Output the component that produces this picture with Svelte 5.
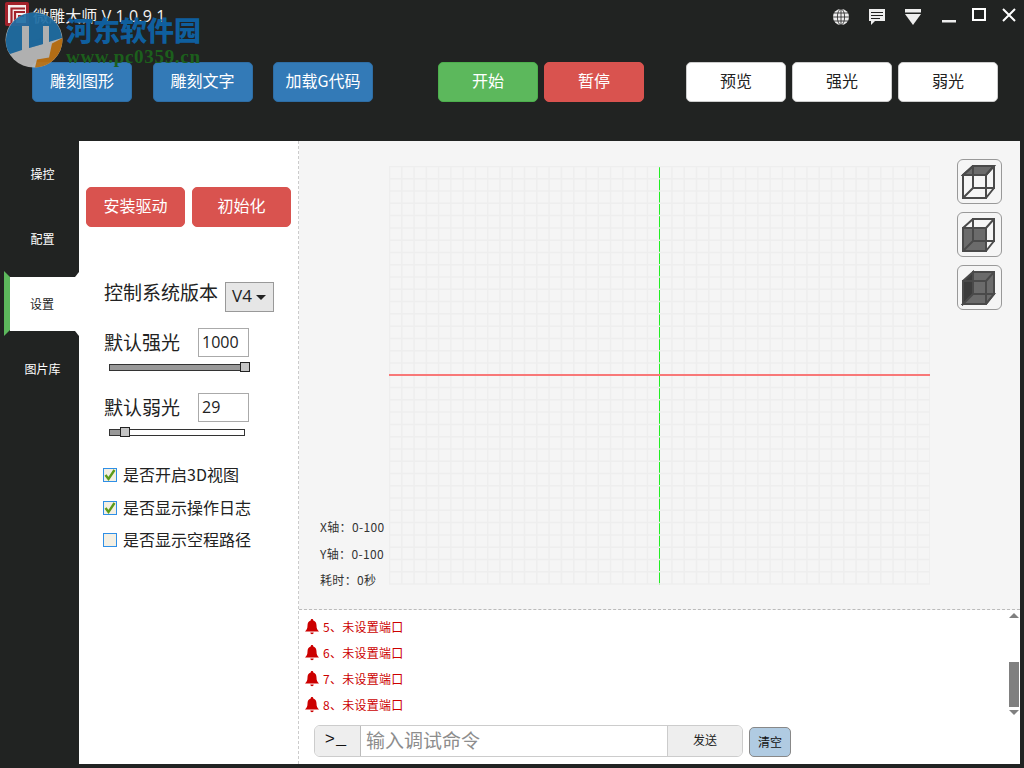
<script>
  const leftBtns = ['雕刻图形', '雕刻文字', '加载G代码'];
  const viewBtns = ['预览', '强光', '弱光'];
  const tabs = ['操控', '配置', '设置', '图片库'];
  const checks = [
    { label: '是否开启3D视图', on: true },
    { label: '是否显示操作日志', on: true },
    { label: '是否显示空程路径', on: false }
  ];
  const logs = [5, 6, 7, 8];

  const W = 541;
  const H = 419;
  const STEP = 12.28;
  const xs = Array.from({ length: 45 }, (_, i) => i * STEP + 0.5);
  const ys = Array.from({ length: 35 }, (_, i) => i * STEP + 0.5);
</script>

{#snippet bell()}
  <svg width="14" height="16" viewBox="0 0 14 16" fill="#cc0000">
    <path d="M7 0c1 0 1.300.7 1.300 1.400C10.500 2 11.500 4 11.500 6.500c0 3 .8 4.500 2.500 6H0c1.700-1.500 2.500-3 2.500-6C2.500 4 3.500 2 5.700 1.400 5.700.7 6 0 7 0z" />
    <path d="M5.300 13.500h3.400a1.700 1.700 0 0 1-3.400 0z" />
  </svg>
{/snippet}

<div class="app">
  <header class="head">
    <div class="titlebar">
      <div class="brand">
        <svg class="logo" width="24" height="24" viewBox="0 0 24 24">
          <rect width="24" height="24" rx="2" fill="#a3222b" />
          <rect x="3" y="3" width="18" height="18" fill="#f5eeee" />
          <path d="M6.500 21V6.500H20M10 21V10h10M13 14h6" fill="none" stroke="#a3222b" stroke-width="2.200" />
        </svg>
        <span class="title">微雕大师 V 1.0.9.1</span>
      </div>
      <div class="winctl">
        <svg width="18" height="18" viewBox="0 0 18 18" fill="none" stroke="#222" stroke-width=".8">
          <circle cx="9" cy="9" r="8" fill="#eee" stroke="none" />
          <ellipse cx="9" cy="9" rx="3.600" ry="8" />
          <path d="M9 1v16M1 9h16M2 5h14M2 13h14" />
        </svg>
        <svg width="18" height="18" viewBox="0 0 18 18">
          <path d="M1 1h16v12H7l-4 4v-4H1z" fill="#eee" />
          <path d="M3 4.500h12M3 7.500h12M3 10.500h9" stroke="#222" stroke-width="1" />
        </svg>
        <svg width="18" height="18" viewBox="0 0 18 18" fill="#eee">
          <rect x="1" y="1" width="16" height="3.500" />
          <path d="M1 6h16L9 17z" />
        </svg>
        <svg class="win-min" width="16" height="16" viewBox="0 0 16 16"><rect x="1" y="12" width="14" height="2.500" fill="#eee" /></svg>
        <svg class="win-tight" width="16" height="16" viewBox="0 0 16 16"><rect x="2" y="1" width="12" height="11" fill="none" stroke="#fff" stroke-width="2" /></svg>
        <svg class="win-tight" width="16" height="16" viewBox="0 0 16 16"><path d="M2 1l12 12M14 1L2 13" stroke="#fff" stroke-width="2" /></svg>
      </div>
    </div>

    <div class="toolbar">
      <div class="group blue-group">
        {#each leftBtns as b}
          <button class="btn blue" type="button">{b}</button>
        {/each}
      </div>
      <div class="group run-group">
        <button class="btn green" type="button">开始</button>
        <button class="btn red" type="button">暂停</button>
      </div>
      <div class="group view-group">
        {#each viewBtns as b}
          <button class="btn white" type="button">{b}</button>
        {/each}
      </div>
    </div>
  </header>

  <!-- watermark sits over the title bar in the reference -->
  <div class="watermark">
    <svg width="58" height="56" viewBox="0 0 58 56" opacity=".92">
      <ellipse cx="29" cy="28" rx="28.500" ry="27.500" fill="#bdbdbd" />
      <path d="M1 30C1 12 14 .5 29 .5S56 12 57 26L44 30V14h-6v18l-14 4V14h-7v24L5 42C2 38 1 34 1 30z" fill="#1f6ea5" />
      <path d="M57.500 26C58 42 46 55 30 55.500l2-8 12-2 3-14z" fill="#c07414" />
      <path d="M24 30l14-4v6l-14 4z" fill="#1f6ea5" opacity=".55" />
    </svg>
    <div class="wm-text">
      <span class="wm-cn">河东软件园</span>
      <span class="wm-url">www.pc0359.cn</span>
    </div>
  </div>

  <div class="body">
    <nav class="tabs">
      {#each tabs as t}
        <div class="tab" class:active={t === '设置'}>{t}</div>
      {/each}
    </nav>

    <aside class="settings">
      <div class="actions">
        <button class="btn red" type="button">安装驱动</button>
        <button class="btn red" type="button">初始化</button>
      </div>

      <div class="row version">
        <span class="lbl">控制系统版本</span>
        <span class="select">V4<i class="caret"></i></span>
      </div>

      <div class="row power">
        <span class="lbl">默认强光</span>
        <span class="num">1000</span>
      </div>
      <div class="slider"><div class="fill" style="width: 100%"></div><div class="knob end"></div></div>

      <div class="row power second">
        <span class="lbl">默认弱光</span>
        <span class="num">29</span>
      </div>
      <div class="slider"><div class="fill" style="width: 12px"></div><div class="knob low"></div></div>

      <div class="checks">
        {#each checks as c}
          <div class="check">
            <span class="box">
              {#if c.on}
                <svg width="14" height="14" viewBox="0 0 14 14"><path d="M2.500 7l3 4 6-9" fill="none" stroke="#5c9a1a" stroke-width="2.400" /></svg>
              {/if}
            </span>
            {c.label}
          </div>
        {/each}
      </div>
    </aside>

    <main class="main">
      <section class="canvas">
        <svg class="grid" width={W} height={H} viewBox="0 0 {W} {H}">
          <line x1="270.500" y1="0" x2="270.500" y2={H} stroke="#22ee22" />
          {#each xs as x, i}
            {#if i !== 22}
              <line x1={x} y1="0" x2={x} y2="418" stroke="#eeeeee" stroke-width="1.500" />
            {/if}
          {/each}
          {#each ys as y}
            <line x1="0" y1={y} x2="541" y2={y} stroke="#eeeeee" stroke-width="1.500" />
          {/each}
          <line x1="0" y1="209" x2={W} y2="209" stroke="#f87878" stroke-width="2" />
        </svg>

        <div class="axis">
          <div>X轴：0-100</div>
          <div>Y轴：0-100</div>
          <div>耗时：0秒</div>
        </div>

        <div class="cubes">
          <button class="cube" type="button" aria-label="顶视图">
            <svg width="36" height="36" viewBox="0 0 36 36" fill="none" stroke="#4a4a4a" stroke-width="2">
              <path d="M12 2h21L25 11H2z" fill="#6b6b6b" />
              <path d="M2 11h23v23H2zM12 2h21v22H12zM2 34l10-10M25 34l8-10M2 11l10-9M25 11l8-9" />
            </svg>
          </button>
          <button class="cube" type="button" aria-label="前视图">
            <svg width="36" height="36" viewBox="0 0 36 36" fill="none" stroke="#4a4a4a" stroke-width="2">
              <path d="M2 11h23v23H2z" fill="#6b6b6b" />
              <path d="M12 2h21v22H12zM2 11l10-9M25 11l8-9M2 34l10-10M25 34l8-10" />
            </svg>
          </button>
          <button class="cube" type="button" aria-label="侧视图">
            <svg width="36" height="36" viewBox="0 0 36 36" fill="none" stroke="#4a4a4a" stroke-width="2">
              <path d="M12 2h21v22H12z" fill="#6b6b6b" />
              <path d="M2 11l10-9v22L2 34z" fill="#3c3c3c" />
              <path d="M2 34l10-10h21l-8 10z" fill="#6b6b6b" />
              <path d="M2 11h23v23H2zM25 11l8-9M25 34l8-10" />
            </svg>
          </button>
        </div>
      </section>

      <section class="console">
        <div class="log">
          <ul>
            <!-- previous entry, scrolled almost out of view -->
            <li>{@render bell()}</li>
            {#each logs as n}
              <li>
                {@render bell()}
                <span>{n}、未设置端口</span>
              </li>
            {/each}
          </ul>
          <div class="scroll">
            <div class="arrow up"></div>
            <div class="thumb"></div>
            <div class="arrow"></div>
          </div>
        </div>
        <div class="cmd">
          <div class="inputgroup">
            <span class="prompt">&gt;_</span>
            <span class="input">输入调试命令</span>
            <span class="send">发送</span>
          </div>
          <span class="clear">清空</span>
        </div>
      </section>
    </main>
  </div>
</div>

<style>
  :global(body) {
    background: #212322;
    overflow: hidden;
  }

  .app {
    position: relative;
    width: 1024px;
    height: 768px;
    display: flex;
    flex-direction: column;
    background: #212322;
    font-family: "Noto Sans CJK SC", "Liberation Sans", sans-serif;
    overflow: hidden;
  }

  .head {
    height: 141px;
    flex: none;
  }

  .titlebar {
    height: 34px;
    display: flex;
    justify-content: space-between;
    padding: 2px 0 0 5px;
    box-sizing: border-box;
  }

  .brand {
    display: flex;
    align-items: flex-start;
    gap: 4px;
  }

  .title {
    color: #f2f2f2;
    font-size: 16px;
    line-height: 28px;
    font-family: "Open Sans", "Noto Sans CJK SC", sans-serif;
    letter-spacing: 0.1px;
  }

  .winctl {
    display: flex;
    gap: 18px;
    padding: 6px 7px 0 0;
    align-items: flex-start;
  }

  .win-min {
    margin-left: 1px;
  }

  .win-tight {
    margin-left: -4px;
  }

  .toolbar {
    display: flex;
    padding: 28px 0 0 32px;
  }

  .group {
    display: flex;
  }

  .blue-group {
    gap: 20.5px;
    width: 406px;
  }

  .run-group {
    gap: 6px;
    width: 248px;
  }

  .view-group {
    gap: 6px;
  }

  .btn {
    width: 100px;
    height: 40px;
    border-radius: 5px;
    border: 1px solid transparent;
    font-family: inherit;
    font-size: 16px;
    color: #fff;
    padding: 0 0 4px;
  }

  .blue {
    background: #337ab7;
    border-color: #2e6da4;
  }

  .green {
    background: #5cb85c;
    border-color: #4cae4c;
  }

  .red {
    background: #d9534f;
    border-color: #d9534f;
  }

  .white {
    background: #fff;
    border-color: #ccc;
    color: #222;
  }

  .watermark {
    position: absolute;
    left: 5px;
    top: 12px;
    display: flex;
    gap: 3px;
    pointer-events: none;
  }

  .wm-text {
    display: flex;
    flex-direction: column;
    padding-top: 2px;
    font-family: "Liberation Serif", "Noto Sans CJK SC", serif;
    font-weight: 700;
  }

  .wm-cn {
    color: #0f5f9e;
    font-size: 27px;
    line-height: 32px;
    font-family: "Noto Sans CJK SC", sans-serif;
    font-weight: 900;
  }

  .wm-url {
    color: #1c5f1c;
    font-size: 19px;
    line-height: 22px;
    letter-spacing: 0.7px;
  }

  .body {
    flex: 1;
    display: flex;
    min-height: 0;
    padding-bottom: 4px;
    padding-right: 4px;
  }

  .tabs {
    width: 79px;
    flex: none;
    display: flex;
    flex-direction: column;
  }

  .tab {
    height: 65px;
    display: flex;
    align-items: center;
    justify-content: center;
    color: #fff;
    font-size: 12px;
    padding-left: 6px;
  }

  .tab.active {
    position: relative;
    background: #fff;
    color: #222;
    height: 54px;
    margin: 6px 0 5px 10px;
    padding: 0 5px 1px 0;
    box-sizing: border-box;
  }

  .tab.active::before {
    content: '';
    position: absolute;
    left: -6px;
    top: -6px;
    width: 6px;
    height: 65px;
    background: #5cb85c;
    clip-path: polygon(0 0, 100% 6px, 100% 59px, 0 100%);
  }

  .tab.active::after {
    content: '';
    position: absolute;
    right: 0;
    top: -5px;
    width: 4px;
    height: 64px;
    background: #fff;
    clip-path: polygon(100% 0, 100% 100%, 0 59px, 0 5px);
  }

  .settings {
    flex: none;
    background: #fff;
    border-right: 1px dashed #ccc;
    padding-left: 6px;
    width: 213px;
  }

  .actions {
    display: flex;
    gap: 7px;
    padding: 46px 0 0 1px;
  }

  .actions .btn {
    width: 99px;
  }

  .row {
    display: flex;
    align-items: center;
    padding-left: 19px;
    color: #222;
  }

  .lbl {
    font-size: 19px;
    line-height: 28px;
  }

  .version {
    margin-top: 55px;
    gap: 7px;
    height: 30px;
  }

  .version .lbl {
    margin-bottom: 10px;
  }

  .select {
    width: 49px;
    height: 30px;
    box-sizing: border-box;
    border: 1px solid #999;
    background: #e6e6e6;
    font-size: 17px;
    display: flex;
    align-items: center;
    padding: 0 0 3px 6px;
    gap: 4px;
    font-family: "Open Sans", sans-serif;
  }

  .caret {
    border: 5.5px solid transparent;
    border-top-color: #222;
    border-bottom: none;
    margin-top: 3px;
  }

  .power {
    height: 29px;
    margin-top: 16px;
    gap: 18px;
  }

  .power .lbl {
    margin-bottom: 2px;
  }

  .power.second {
    margin: 22px 0 1px;
  }

  .num {
    width: 51px;
    height: 29px;
    box-sizing: border-box;
    border: 1px solid #aaa;
    font-size: 16px;
    line-height: 26px;
    padding-left: 3px;
    font-family: "Open Sans", sans-serif;
  }

  .slider {
    position: relative;
    width: 136px;
    height: 7px;
    margin: 7px 0 0 24px;
    border: 1px solid #333;
    box-sizing: border-box;
    background: #fff;
  }

  .fill {
    height: 100%;
    background: #999;
  }

  .knob {
    position: absolute;
    top: -3px;
    width: 8px;
    height: 8px;
    background: #c4c4c4;
    border: 1px solid #222;
  }

  .knob.end {
    right: -6px;
  }

  .knob.low {
    left: 10px;
  }

  .checks {
    margin-top: 27px;
    padding-left: 18px;
    display: flex;
    flex-direction: column;
    gap: 10.7px;
  }

  .check {
    display: flex;
    align-items: center;
    gap: 6px;
    font-size: 16px;
    line-height: 22px;
    color: #222;
  }

  .box {
    width: 14px;
    height: 14px;
    margin-top: 2px;
    box-sizing: border-box;
    border: 1px solid #2f8fe6;
    background: #f3efe3;
    display: flex;
  }

  .box svg {
    margin: -1px;
  }

  .main {
    flex: 1;
    display: flex;
    flex-direction: column;
    min-width: 0;
  }

  .canvas {
    position: relative;
    height: 469px;
    flex: none;
    background: #f5f5f5;
    border-bottom: 1px dashed #bbb;
    box-sizing: border-box;
  }

  .grid {
    position: absolute;
    left: 90px;
    top: 25px;
  }

  .axis {
    position: absolute;
    left: 21px;
    top: 373px;
    font-size: 12px;
    line-height: 26.5px;
    letter-spacing: 0.35px;
    color: #333;
  }

  .cubes {
    position: absolute;
    left: 658px;
    top: 18px;
    display: flex;
    flex-direction: column;
    gap: 8px;
  }

  .cube {
    width: 45px;
    height: 45px;
    padding: 0 2px 0 0;
    border: 1px solid #999;
    border-radius: 6px;
    background: transparent;
    display: flex;
    align-items: center;
    justify-content: center;
  }

  .console {
    flex: 1;
    background: #fff;
    display: flex;
    flex-direction: column;
    min-height: 0;
  }

  .log {
    display: flex;
    justify-content: space-between;
    height: 109px;
    overflow: hidden;
  }

  .log ul {
    list-style: none;
    margin: -22px 0 0;
    padding: 0 0 0 6px;
  }

  .log li {
    display: flex;
    align-items: center;
    gap: 4px;
    height: 26px;
    font-size: 12px;
    letter-spacing: 0.25px;
    color: #cc0000;
  }

  .log li span {
    padding-bottom: 2px;
  }

  .scroll {
    width: 11px;
    padding-top: 3px;
    box-sizing: border-box;
  }

  .thumb {
    width: 10px;
    height: 45px;
    margin-top: 44px;
    background: #808080;
  }

  .arrow {
    margin-top: 3px;
    width: 0;
    border: 5px solid transparent;
    border-top-color: #808080;
    border-bottom: none;
  }

  .arrow.up {
    margin-top: 0;
    border-top: none;
    border-bottom: 5px solid #808080;
  }

  .cmd {
    display: flex;
    align-items: flex-end;
    gap: 6px;
    padding: 6px 0 0 15px;
  }

  .inputgroup {
    width: 429px;
    height: 32px;
    box-sizing: border-box;
    display: flex;
    border: 1px solid #ccc;
    border-radius: 6px;
    overflow: hidden;
  }

  .prompt {
    width: 46px;
    flex: none;
    background: #eee;
    border-right: 1px solid #bbb;
    box-sizing: border-box;
    font-size: 17px;
    line-height: 28px;
    padding-right: 3px;
    text-align: center;
    letter-spacing: 1px;
    color: #111;
    font-family: "Liberation Mono", monospace;
  }

  .input {
    flex: 1;
    font-size: 19px;
    line-height: 28px;
    padding-left: 5px;
    color: #8d8d8d;
    border-right: 1px solid #ccc;
  }

  .send {
    width: 74px;
    flex: none;
    background: #eee;
    text-align: center;
    font-size: 12px;
    line-height: 28px;
    color: #222;
  }

  .clear {
    width: 42px;
    height: 30px;
    box-sizing: border-box;
    border: 1px solid #888;
    border-radius: 5px;
    background: #b0cbe2;
    text-align: center;
    font-size: 12px;
    line-height: 27px;
    color: #111;
  }
</style>
